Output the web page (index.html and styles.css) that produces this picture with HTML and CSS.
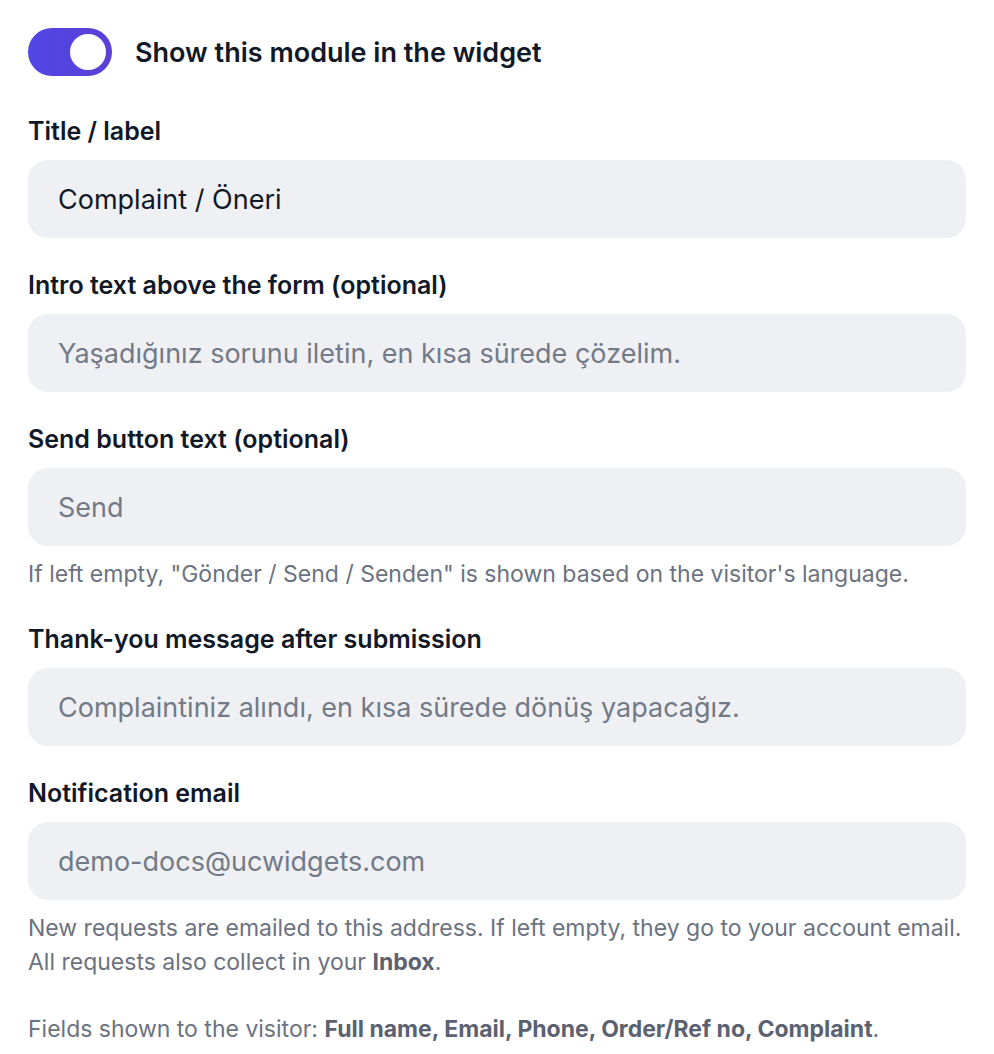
FILE: index.html
```html
<!DOCTYPE html>
<html lang="en">
<head>
<meta charset="utf-8">
<title>Complaint module</title>
<link rel="stylesheet" href="styles.css">
</head>
<body>
<main class="panel">
  <div class="toggle-row">
    <span class="toggle"><span class="knob"></span></span>
    <span class="toggle-label">Show this module in the widget</span>
  </div>

  <div class="field">
    <label class="label">Title / label</label>
    <div class="input">Complaint / Öneri</div>
  </div>

  <div class="field">
    <label class="label">Intro text above the form (optional)</label>
    <div class="input placeholder">Yaşadığınız sorunu iletin, en kısa sürede çözelim.</div>
  </div>

  <div class="field with-hint">
    <label class="label">Send button text (optional)</label>
    <div class="input placeholder">Send</div>
    <p class="hint">If left empty, "Gönder / Send / Senden" is shown based on the visitor's language.</p>
  </div>

  <div class="field">
    <label class="label">Thank-you message after submission</label>
    <div class="input placeholder">Complaintiniz alındı, en kısa sürede dönüş yapacağız.</div>
  </div>

  <div class="field with-hint">
    <label class="label">Notification email</label>
    <div class="input placeholder">demo-docs@ucwidgets.com</div>
    <p class="hint">New requests are emailed to this address. If left empty, they go to your account email.<br>All requests also collect in your <b>Inbox</b>.</p>
  </div>

  <p class="hint fields">Fields shown to the visitor: <b>Full name, Email, Phone, Order/Ref no, Complaint</b>.</p>
</main>
</body>
</html>
```

FILE: styles.css
```css
html, body {
  margin: 0;
  padding: 0;
  background: #ffffff;
}

body {
  font-family: Inter, "Noto Sans", "Liberation Sans", sans-serif;
  color: #111827;
}

.panel {
  padding: 28px;
  display: flex;
  flex-direction: column;
}

.toggle-row {
  display: flex;
  align-items: center;
  gap: 23px;
  margin-bottom: 40px;
}

.toggle {
  width: 84px;
  height: 48px;
  border-radius: 24px;
  background: linear-gradient(90deg, #4f46e5, #5b3fd6);
  display: flex;
  align-items: center;
  justify-content: flex-end;
  padding: 0 6px;
  box-sizing: border-box;
  flex-shrink: 0;
}

.knob {
  width: 36px;
  height: 36px;
  border-radius: 50%;
  background: #ffffff;
}

.toggle-label {
  font-size: 27px;
  line-height: 34px;
  font-weight: 600;
  color: #111827;
  padding-top: 2px;
}

.field {
  display: flex;
  flex-direction: column;
  margin-bottom: 32px;
}

.field.with-hint {
  margin-bottom: 33px;
}

.label {
  font-size: 25px;
  line-height: 30px;
  font-weight: 600;
  color: #111827;
  margin-bottom: 14px;
}

.input {
  height: 78px;
  box-sizing: border-box;
  border-radius: 20px;
  background: #eff0f4;
  padding: 0 30px;
  display: flex;
  align-items: center;
  font-size: 27px;
  color: #111827;
}

.input.placeholder {
  color: #737a87;
}

.hint {
  margin: 11px 0 0;
  font-size: 23px;
  line-height: 34px;
  color: #6b7280;
}

.hint b {
  font-weight: 700;
  color: #5b6170;
}

.hint.fields {
  margin: 0;
}
```
